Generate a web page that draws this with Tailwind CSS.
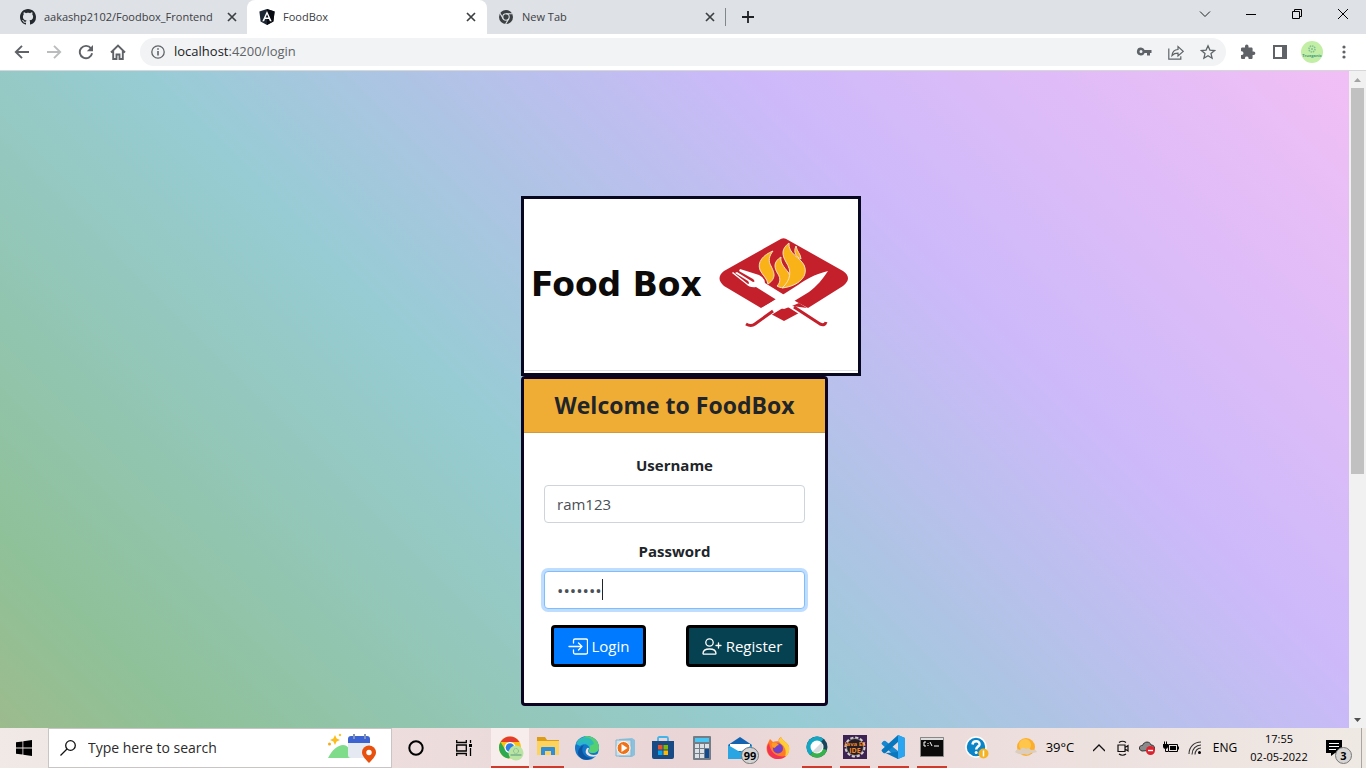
<!DOCTYPE html>
<html lang="en">
<head>
<meta charset="utf-8">
<meta name="viewport" content="width=device-width, initial-scale=1">
<title>FoodBox</title>
<script src="https://cdn.jsdelivr.net/npm/@tailwindcss/browser@4"></script>
</head>
<body class="flex h-screen flex-col overflow-hidden font-['Open_Sans','Noto_Sans',sans-serif] text-[#212529]">

<!-- Tab strip -->
<header class="shrink-0">
  <div class="flex h-[34px] items-stretch bg-[#dee1e6] text-[11px] text-[#3c4043]">
    <div class="flex w-[247px] items-center pl-5 pr-[7px]">
      <svg class="size-4 shrink-0" viewBox="0 0 16 16" fill="#24292f" aria-hidden="true"><path d="M8 0C3.58 0 0 3.58 0 8c0 3.54 2.29 6.53 5.47 7.59.4.07.55-.17.55-.38 0-.19-.01-.82-.01-1.49-2.01.37-2.53-.49-2.69-.94-.09-.23-.48-.94-.82-1.13-.28-.15-.68-.52-.01-.53.63-.01 1.08.58 1.23.82.72 1.21 1.87.87 2.33.66.07-.52.28-.87.51-1.07-1.78-.2-3.64-.89-3.64-3.95 0-.87.31-1.59.82-2.15-.08-.2-.36-1.02.08-2.12 0 0 .67-.21 2.2.82.64-.18 1.32-.27 2-.27s1.36.09 2 .27c1.53-1.04 2.2-.82 2.2-.82.44 1.1.16 1.92.08 2.12.51.56.82 1.27.82 2.15 0 3.07-1.87 3.75-3.65 3.95.29.25.54.73.54 1.48 0 1.07-.01 1.93-.01 2.2 0 .21.15.46.55.38A8.01 8.01 0 0 0 16 8c0-4.42-3.58-8-8-8z"/></svg>
      <span class="ml-2 flex-1 whitespace-nowrap">aakashp2102/Foodbox_Frontend</span>
      <button class="size-4 shrink-0" aria-label="Close tab"><svg viewBox="0 0 16 16" stroke="#3c4043" stroke-width="1.7" aria-hidden="true"><path d="M4 4l8 8M12 4l-8 8"/></svg></button>
    </div>
    <div class="flex w-[240px] items-center rounded-t-lg bg-white pl-3 pr-2">
      <svg class="size-4 shrink-0" viewBox="0 0 16 16" aria-hidden="true"><path d="M8 0l7.6 2.6-1.2 9.9L8 16l-6.400-3.500L.4 2.600z" fill="#1d2733"/><path d="M8 0l7.600 2.600-1.200 9.900L8 16z" fill="#080c12"/><path fill="#fff" d="M8 1.900L3.300 12.200h1.800l.95-2.300h3.900l.95 2.300h1.800zm0 3.400l1.350 3.200h-2.700z"/></svg>
      <span class="ml-2 flex-1">FoodBox</span>
      <button class="size-4 shrink-0" aria-label="Close tab"><svg viewBox="0 0 16 16" stroke="#3c4043" stroke-width="1.7" aria-hidden="true"><path d="M4 4l8 8M12 4l-8 8"/></svg></button>
    </div>
    <div class="my-2 flex w-[239px] items-center border-r border-[#80868b] pl-3 pr-[7px]">
      <svg class="size-[14px] shrink-0" viewBox="0 0 16 16" aria-hidden="true"><circle cx="8" cy="8" r="8" fill="#3c4043"/><circle cx="8" cy="8" r="3.700" fill="none" stroke="#dee1e6" stroke-width="1.300"/><path d="M8 4.300h7.200M4.800 9.900L1.200 3.700M11.200 9.900L7.600 16" stroke="#dee1e6" stroke-width="1.300"/></svg>
      <span class="ml-[9px] flex-1">New Tab</span>
      <button class="size-4 shrink-0" aria-label="Close tab"><svg viewBox="0 0 16 16" stroke="#3c4043" stroke-width="1.7" aria-hidden="true"><path d="M4 4l8 8M12 4l-8 8"/></svg></button>
    </div>
    <button class="flex w-11 items-center justify-center" aria-label="New tab"><svg class="size-3" viewBox="0 0 12 12" stroke="#202124" stroke-width="1.800" aria-hidden="true"><path d="M6 0v12M0 6h12"/></svg></button>
    <div class="ml-auto flex pb-[6px]">
      <button class="flex w-[46px] items-center justify-center" aria-label="Search tabs"><svg class="size-3" viewBox="0 0 12 12" fill="none" stroke="#202124" aria-hidden="true"><path d="M1 3.500l5 5 5-5"/></svg></button>
      <button class="flex w-[46px] items-center justify-center" aria-label="Minimize"><svg class="size-[10px]" viewBox="0 0 10 10" stroke="#000" aria-hidden="true"><path d="M0 5.500h10"/></svg></button>
      <button class="flex w-[46px] items-center justify-center" aria-label="Restore"><svg class="size-[10px]" viewBox="0 0 10 10" fill="none" stroke="#000" aria-hidden="true"><path d="M.5 2.500h7v7h-7zM2.500 2.500v-2h7v7h-2"/></svg></button>
      <button class="flex w-[46px] items-center justify-center" aria-label="Close"><svg class="size-[10px]" viewBox="0 0 10 10" stroke="#000" aria-hidden="true"><path d="M0 0l10 10M10 0L0 10"/></svg></button>
    </div>
  </div>

  <!-- Address bar -->
  <div class="flex h-[37px] items-center border-b border-[#d5d7da] bg-white pl-[14px] pr-4">
    <nav class="flex gap-4">
      <button aria-label="Back"><svg class="size-4" viewBox="0 0 16 16" fill="none" stroke="#5f6368" stroke-width="1.900" aria-hidden="true"><path d="M15 8H2.500M8 1.800L1.800 8 8 14.200"/></svg></button>
      <button aria-label="Forward"><svg class="size-4" viewBox="0 0 16 16" fill="none" stroke="#babcbe" stroke-width="1.900" aria-hidden="true"><path d="M1 8h12.500M8 1.800L14.200 8 8 14.200"/></svg></button>
      <button aria-label="Reload"><svg class="size-4" viewBox="0 0 16 16" aria-hidden="true"><path d="M13 4.400A6.200 6.200 0 1 0 14.100 9.300" fill="none" stroke="#5f6368" stroke-width="1.900"/><path d="M15 1v6.200H8.800z" fill="#5f6368"/></svg></button>
      <button aria-label="Home"><svg class="size-4" viewBox="0 0 16 16" fill="none" stroke="#5f6368" stroke-width="1.900" aria-hidden="true"><path d="M1 8.500L8 1.500l7 7M3.200 7v8h3.300v-4.500h3V15h3.300V7"/></svg></button>
    </nav>
    <div class="ml-[14px] flex h-7 flex-1 items-center rounded-full bg-[#f1f3f4] pl-[11px] pr-[10px]">
      <svg class="size-[14px] shrink-0" viewBox="0 0 14 14" aria-hidden="true"><circle cx="7" cy="7" r="6.200" fill="none" stroke="#5f6368" stroke-width="1.300"/><path d="M7 6v4.500M7 3.300v1.500" stroke="#5f6368" stroke-width="1.600"/></svg>
      <span class="ml-[9px] flex-1 text-[13px] text-[#5f6368]"><span class="text-[#202124]">localhost</span>:4200/login</span>
      <div class="flex items-center gap-4">
        <button aria-label="Saved passwords"><svg class="size-4" viewBox="0 0 16 16" aria-hidden="true"><path fill="#5f6368" fill-rule="evenodd" d="M5 3.500a4 4 0 1 0 3.600 5.500H11v2.500h3V9h1.500V6H8.600A4 4 0 0 0 5 3.500zm0 2.500a1.500 1.500 0 1 1 0 3 1.500 1.500 0 0 1 0-3z"/></svg></button>
        <button aria-label="Share"><svg class="size-4" viewBox="0 0 16 16" fill="none" stroke="#5f6368" stroke-width="1.200" aria-hidden="true"><path d="M.8 4.500v10.700h12v-3M4 11.500c.4-4 2.600-5.800 6-6V2.600L15.200 7.400 10 12V9.200c-2.700 0-4.500.7-6 2.300z"/></svg></button>
        <button aria-label="Bookmark"><svg class="size-4" viewBox="0 0 16 16" fill="none" stroke="#5f6368" stroke-width="1.300" aria-hidden="true"><path d="M8 1.800l1.900 4.300 4.700.4-3.600 3.100 1.100 4.600L8 11.800l-4.100 2.400L5 9.600 1.400 6.500l4.700-.4z"/></svg></button>
      </div>
    </div>
    <div class="ml-[14px] flex items-center">
      <button aria-label="Extensions"><svg class="size-4" viewBox="0 0 16 16" fill="#5f6368" aria-hidden="true"><path d="M13.600 7.500h-1V4.700c0-.8-.6-1.300-1.400-1.300H8.500V2.300a1.700 1.700 0 0 0-3.500 0v1.100H2.300C1.500 3.400 1 4 1 4.700v2.600h1a1.900 1.900 0 0 1 0 3.700H1v2.700c0 .7.600 1.300 1.300 1.300h2.600v-1a1.900 1.900 0 0 1 3.700 0v1h2.600c.8 0 1.400-.6 1.400-1.300V11h1a1.700 1.700 0 0 0 0-3.500z"/></svg></button>
      <button class="ml-[17px]" aria-label="Side panel"><svg class="size-[14px]" viewBox="0 0 14 14" aria-hidden="true"><path fill="#5f6368" fill-rule="evenodd" d="M0 0h14v14H0zM2 2v10h7V2z"/></svg></button>
      <button class="ml-[14px]" aria-label="Profile"><svg class="size-[22px]" viewBox="0 0 22 22" aria-hidden="true"><circle cx="11" cy="11" r="11" fill="#c3eea5"/><circle cx="11" cy="8" r="3" fill="none" stroke="#7fbf96" stroke-width="1.500" stroke-dasharray="1.500 .8"/><circle cx="11" cy="8" r="1" fill="#7fbf96"/><text x="11" y="16" font-size="4" font-weight="700" text-anchor="middle" fill="#3f9a80">Trueganic</text></svg></button>
      <button class="ml-[15px]" aria-label="Menu"><svg class="h-4 w-3" viewBox="0 0 12 16" fill="#5f6368" aria-hidden="true"><circle cx="6" cy="3" r="1.600"/><circle cx="6" cy="8" r="1.600"/><circle cx="6" cy="13" r="1.600"/></svg></button>
    </div>
  </div>
</header>

<!-- Page -->
<div class="flex min-h-0 flex-1">
  <main class="min-w-0 flex-1 overflow-hidden">
    <div class="flex min-h-[1068px] justify-center bg-[linear-gradient(45deg,#b8ae74,#8fc199,#97ccd4,#cdb9fa,#f1bff5)] pt-[125px]">
      <div class="w-[307px]">
        <div class="flex h-[180px] w-[340px] flex-col border-[3px] border-[#080720] bg-white">
          <div class="flex flex-1 items-center border-b border-[#dee2e6] pl-[7px]">
            <span class="w-[188px] whitespace-nowrap font-['DejaVu_Sans',sans-serif] text-[33px] font-bold leading-none text-[#0d0a0a]">Food Box</span>
            <svg class="h-24 w-[130px]" viewBox="0 0 130 96" role="img" aria-label="Fork, knife and flame">
              <path d="M60 3Q64.500-.5 69 3L124 34Q134 41 124 49L89 71H42L5 49Q-4 41 5 34z" fill="#c4202b"/>
              <path d="M42 71h47L65 58z" fill="#fff"/>
              <path d="M50 76l6-6 9 2 8-3 7 7-15 8z" fill="#c4202b"/>
              <g fill="#f9b218" stroke="#fbe0c0" stroke-width="1">
                <path d="M54 14C44 18 38 25 41 33c3 6 7 8 8 14 9-6 6-12 3-18-3-5-2-10 2-15z"/>
                <path d="M62 20c-8 5-7 11-3 17 3 5 2 9-1 12 3 2 6 2 9 1 6-5 5-10 2-15-4-5-8-9-7-15z"/>
                <path d="M70 6c-8 6-7 12-3 19 6 9 5 18-4 26 17-2 27-12 22-23C81 20 69 17 70 6z"/>
                <path d="M77 9c-3 6 0 11 5 13 0-5-4-7-5-13z"/>
              </g>
              <path d="M109 34C94 38 88 42 79 48L40 73l9 7L90 55c8-6 13-12 19-21z" fill="#fff"/>
              <path d="M13 36l14 11q4 4 10 3l51 32 8-5-50-31q0-5-6-8L21 32l-1 2 14 8q3 3 0 3L18 35l-2 1 13 8q2 3 0 3L14 35z" fill="#fff"/>
              <path d="M54 74L36 87q-4 3-9 0M75 70l26 17q5 2 6-2" fill="none" stroke="#c4202b" stroke-width="3"/>
              <path d="M73 69l7-3 8 5z" fill="#c4202b"/>
            </svg>
          </div>
          <div class="h-[2px]"></div>
        </div>

        <form class="rounded border-[3px] border-[#0c0420] bg-white text-center">
          <h1 class="flex h-[54px] items-center justify-center border-b border-[#cf9a3d] bg-[#f0ad36] text-[23px] font-bold">Welcome to FoodBox</h1>
          <div class="px-5 pb-9 pt-5">
            <label for="username" class="mb-2 block text-[15px] font-bold leading-6">Username</label>
            <input id="username" type="text" value="ram123" class="mb-4 block h-[38px] w-full rounded border border-[#ced4da] bg-white px-3 text-[15px] text-[#495057] outline-none">
            <label for="password" class="mb-2 block text-[15px] font-bold leading-6">Password</label>
            <div class="relative mb-4">
              <input id="password" type="password" value="ram@123" class="block h-[38px] w-full rounded border border-[#80bdff] bg-white px-3 text-[17px] text-[#495057] shadow-[0_0_0_3px_#bfdeff] outline-none">
              <span class="absolute left-[58px] top-2 h-[21px] w-px bg-[#212529]"></span>
            </div>
            <div class="flex justify-center gap-10 text-[15px] text-white">
              <button type="button" class="flex h-[42px] w-[95px] items-center justify-center gap-1 rounded border-[3px] border-black bg-[#007bff]">
                <svg class="size-5" viewBox="0 0 20 20" fill="none" stroke="currentColor" stroke-width="1.300" stroke-linecap="round" stroke-linejoin="round" aria-hidden="true"><path d="M5.500 7V4.500a1.500 1.500 0 0 1 1.500-1.500h11a1.500 1.500 0 0 1 1.500 1.500v12a1.500 1.500 0 0 1-1.500 1.500H7a1.500 1.500 0 0 1-1.500-1.500V14M1 10.500h13M10.500 7l3.500 3.500-3.500 3.500"/></svg>Login</button>
              <button type="button" class="flex h-[42px] w-[112px] items-center justify-center gap-1 rounded border-[3px] border-black bg-[#064152]">
                <svg class="size-5" viewBox="0 0 20 20" fill="none" stroke="currentColor" stroke-width="1.300" stroke-linecap="round" stroke-linejoin="round" aria-hidden="true"><circle cx="7.500" cy="6.500" r="3.700"/><path d="M1 17.500c0-3 2.500-4.500 6.500-4.500s6.500 1.500 6.500 4.500c0 .5-.3.700-.8.700H1.800c-.5 0-.8-.2-.8-.7zM14 9.500h5M16.500 7v5"/></svg>Register</button>
            </div>
          </div>
        </form>
      </div>
    </div>
  </main>
  <div class="flex w-[17px] flex-col items-center bg-[#f1f1f1]" aria-hidden="true">
    <svg class="h-[17px] w-[17px] shrink-0" viewBox="0 0 17 17"><path d="M5 11l3.500-4L12 11z" fill="#a3a3a3"/></svg>
    <div class="flex w-[13px] flex-1 flex-col"><div class="h-[62%] bg-[#c1c1c1]"></div></div>
    <svg class="h-[17px] w-[17px] shrink-0" viewBox="0 0 17 17"><path d="M5 7l3.500 4L12 7z" fill="#505050"/></svg>
  </div>
</div>

<!-- Taskbar -->
<footer class="flex h-10 shrink-0 items-stretch bg-linear-to-r from-[#f0e9e6] via-[#ead5d6] via-50% to-[#efe9e4] text-black">
  <button class="flex w-12 items-center justify-center" aria-label="Start"><svg class="size-4" viewBox="0 0 16 16" aria-hidden="true"><path d="M0 2.300l6.500-.9v6.200H0zM7.300 1.300L16 0v7.600H7.300zM0 8.400h6.500v6.200L0 13.700zM7.300 8.400H16V16l-8.700-1.200z"/></svg></button>
  <label class="flex w-[344px] items-center border border-[#c8c5c4] bg-white pl-[11px] pr-[14px]">
    <svg class="size-4 shrink-0" viewBox="0 0 16 16" fill="none" stroke="#111" stroke-width="1.300" aria-hidden="true"><circle cx="10.500" cy="5.500" r="4.800"/><path d="M7 9L.5 15.500"/></svg>
    <input type="text" aria-label="Search" placeholder="Type here to search" class="ml-3 w-0 flex-1 text-sm outline-none placeholder:text-[#2b2b2b]">
    <svg class="h-8 w-[50px] shrink-0" viewBox="0 0 50 32" aria-hidden="true"><path d="M1 26c4-8 10-13 15-13s7 4 9 13z" fill="#7fdc8b"/><path d="M8 3l1.600 3.400L13 8l-3.400 1.600L8 13l-1.600-3.400L3 8l3.400-1.600z" fill="#fbbc1d"/><circle cx="2.500" cy="12" r="1.500" fill="#f6a81c"/><circle cx="13" cy="3" r="1.200" fill="#fbc52c"/><rect x="21" y="5" width="22" height="21" rx="3" fill="#e4e9f2"/><path d="M21 11V7q0-3 3-3h16q3 0 3 3v4z" fill="#3d63d2"/><path d="M27 2v5M38 2v5" stroke="#8494b5" stroke-width="2"/><path d="M42 31c-5-5-7-8-7-10.500a7 7 0 0 1 14 0C49 23 47 26 42 31z" fill="#e8500e"/><circle cx="42" cy="20.500" r="2.700" fill="#fff"/></svg>
  </label>
  <button class="flex w-12 items-center justify-center" aria-label="Cortana"><svg class="size-4" viewBox="0 0 16 16" aria-hidden="true"><circle cx="8" cy="8" r="6.700" fill="none" stroke="#000" stroke-width="2"/></svg></button>
  <button class="flex w-[47px] items-center justify-center" aria-label="Task view"><svg class="size-4" viewBox="0 0 16 16" fill="none" stroke="#000" stroke-width="1.300" aria-hidden="true"><path d="M.7 0v2.500h9.600V0M.7 16v-2.500h9.600V16M.7 5h9.600v6H.7zM14.500 0v3M14.500 8v8"/><path d="M13 4h3v3h-3z" fill="#000" stroke="none"/></svg></button>

  <nav class="ml-1 grid w-[460px] grid-cols-12" aria-label="Applications">
    <button class="flex flex-col items-center justify-between border-b-2 border-[#d13a2a] bg-[#f7edec]" aria-label="Chrome"><svg class="mt-[7px] h-[26px] w-[28px]" viewBox="-2 0 28 26" aria-hidden="true"><circle cx="12" cy="12.500" r="11" fill="#fbc116"/><path d="M2.500 7a11 11 0 0 0 8.500 16.500l5.500-9L12 12.500 7.500 15z" fill="#2da94f"/><path d="M2.500 7A11 11 0 0 1 21.500 7H12z" fill="#e33b2e"/><circle cx="12" cy="12.500" r="5.500" fill="#fff"/><circle cx="12" cy="12.500" r="4.300" fill="#2f7de9"/><circle cx="18" cy="18" r="7.500" fill="#b9e4a2"/><circle cx="18" cy="16" r="2.500" fill="none" stroke="#76b28c" stroke-dasharray="1 .6"/><path d="M12.500 20h11" stroke="#76b28c" stroke-width="1.500"/></svg></button>
    <button class="mx-1 flex items-center justify-center border-b-2 border-[#d13a2a]" aria-label="File Explorer"><svg class="h-6 w-6 shrink-0" viewBox="0 0 24 24" aria-hidden="true"><path d="M1 2h8l2 3h12v5H1z" fill="#dd9c15"/><path d="M1 6h22v14H1z" fill="#fed25e"/><path d="M5 20v-7q0-1 1-1h12q1 0 1 1v7h-4v-4H9v4z" fill="#2f8edb"/></svg></button>
    <button class="flex items-center justify-center" aria-label="Edge"><svg class="size-6" viewBox="0 0 24 24" aria-hidden="true"><circle cx="12" cy="12" r="12" fill="#1277c9"/><path d="M1 8A12 12 0 0 1 24 11c0 4-3 6-7 6-3 0-4-1-3-3 2-5-5-8-9-4z" fill="#2bb3d4"/><path d="M10 .2A12 12 0 0 1 24 11c0 4-3 6-7 6-2 0-3.500-1-3-2.500 3-5-1-10-8-9z" fill="#54cf72"/><path d="M3 4C11-2 18 3 19 8l-5 2C12 6 6 5 2 8z" fill="#2dbbb9"/><path d="M14 12.500c-3 5 3 8 9 5.500l-1 2c-6 2-13-1-11-6 1-2 2-3 3-1.500z" fill="#eee1e3"/><path d="M9 9c-4 4-1 13 8 13-8 5-17-2-13-9q2-3.500 5-4z" fill="#0d54a0"/></svg></button>
    <button class="flex items-center justify-center" aria-label="Media Player"><svg class="size-[22px]" viewBox="0 0 22 22" aria-hidden="true"><path d="M5 2l13-1 3 2v15l-3 2H5z" fill="#8bc1dd"/><path d="M2 3h15v16H2z" fill="#c9e2ee" stroke="#86b3ca"/><circle cx="9.500" cy="11" r="6.500" fill="#ee7219" stroke="#fff"/><path d="M7.500 7l6 4-6 4z" fill="#fff"/></svg></button>
    <button class="flex items-center justify-center" aria-label="Microsoft Store"><svg class="size-6" viewBox="0 0 24 24" aria-hidden="true"><path d="M7 7V2.500Q7 1 8.500 1h7Q17 1 17 2.500V7" fill="none" stroke="#41b4ea" stroke-width="1.800"/><path d="M1 5h22v16q0 2-2 2H3q-2 0-2-2z" fill="#194a83"/><path d="M7 9h4.500v4.500H7z" fill="#f25022"/><path d="M12.500 9H17v4.500h-4.500z" fill="#7fba00"/><path d="M7 14.500h4.500V19H7z" fill="#00a4ef"/><path d="M12.500 14.500H17V19h-4.500z" fill="#ffb900"/></svg></button>
    <button class="flex items-center justify-center" aria-label="Calculator"><svg class="h-6 w-5" viewBox="0 0 20 24" aria-hidden="true"><rect x="1" width="18" height="24" rx="1" fill="#747d86"/><path d="M3 2h14v4H3z" fill="#49c6f3"/><path d="M3 8h4v4H3zM8 8h4v4H8zM13 8h4v4h-4zM3 13h4v4H3zM8 13h4v4H8zM3 18h4v4H3zM8 18h4v4H8z" fill="#dce1e6"/><path d="M13 13h4v9h-4z" fill="#124b8f"/></svg></button>
    <button class="relative flex items-center justify-center" aria-label="Mail, 99 unread"><svg class="size-6" viewBox="0 0 24 24" aria-hidden="true"><path d="M0 9l12-8 12 8v13H0z" fill="#1463b0"/><path d="M2 8h20v7H2z" fill="#fff"/><path d="M0 9l12 7 12-7v14H0z" fill="#2aa5e4"/></svg><span class="absolute bottom-1 right-0 rounded-full border border-[#777] bg-[#d4d3d4] px-[2px] text-[11px] font-bold leading-[15px]">99</span></button>
    <button class="flex items-center justify-center" aria-label="Firefox"><svg class="size-6" viewBox="0 0 24 24" aria-hidden="true"><path d="M2 7l2-4 3 3c2-1 4-1 6-.5C12 4 13 2 15 1c1 4 7 5 8 10 1 7-4 12-11 12C4 23-1 17 1 9z" fill="#ff7a24"/><path d="M15 1c1 4 7 5 8 10 1 4-1 8-4 10 2-6 0-11-5-14-2-2-1-4 1-6z" fill="#ffce38"/><path d="M1 11c0 14 15 14 19 9-5 1-15 1-17-13z" fill="#f13356"/><circle cx="12" cy="12.500" r="5" fill="#7341c8"/><path d="M6 7c3-1 5 0 7 2-3 0-3 3-5 3-2-1-3-3-2-5z" fill="#ff9c27"/></svg></button>
    <button class="mx-1 flex items-center justify-center border-b-2 border-[#d13a2a]" aria-label="Webex"><svg class="size-[22px] shrink-0" viewBox="0 0 22 22" aria-hidden="true"><circle cx="11" cy="11" r="10.500" fill="#16445b"/><path d="M.5 11a10.500 10.500 0 0 1 17-8L4 19a10.500 10.500 0 0 1-3.500-8z" fill="#13a7c4"/><path d="M4 19A10.500 10.500 0 0 0 21 14L11 11z" fill="#36b24b"/><circle cx="11" cy="11" r="6.500" fill="#fff"/><path d="M15.500 6.500a6.500 6.500 0 0 1-9 9z" fill="#d7dcdf"/></svg></button>
    <button class="mx-1 flex items-center justify-center border-b-2 border-[#d13a2a]" aria-label="Eclipse Java EE IDE"><svg class="size-6 shrink-0" viewBox="0 0 24 24" aria-hidden="true"><path d="M0 0h24v24H0z" fill="#3c2253"/><circle cx="12" cy="12" r="9" fill="#241d26" stroke="#d5d0cb" stroke-width="3" stroke-dasharray="3 1.700"/><circle cx="12" cy="12" r="8.500" fill="#261d28" stroke="#aaa" stroke-width=".7"/><text x="12" y="11" text-anchor="middle" font-size="6" font-weight="700" fill="#f28a24">Java EE</text><text x="12" y="18" text-anchor="middle" font-size="7" font-weight="700" fill="#f28a24">IDE</text></svg></button>
    <button class="mx-1 flex items-center justify-center border-b-2 border-[#d13a2a]" aria-label="Visual Studio Code"><svg class="size-6 shrink-0" viewBox="0 0 24 24" aria-hidden="true"><path d="M17 0l7 3v18l-7 3L1 9.500q-1-1 0-2L2.500 6q1-.7 2 0L17 16z" fill="#1588d1"/><path d="M17 24L4.500 18Q3.500 18.700 2.500 18L1 16.500q-1-1 0-2L17 0v7L4.500 18 17 17z" fill="#0877bd"/><path d="M17 0l7 3v18l-7 3z" fill="#2ba5ef"/></svg></button>
    <button class="mx-1 flex items-center justify-center border-b-2 border-[#d13a2a]" aria-label="Command Prompt"><svg class="h-5 w-6 shrink-0" viewBox="0 0 24 20" aria-hidden="true"><path d="M.5.5h23v19H.5z" fill="#0b0b0b" stroke="#888"/><path d="M1 1h22v2H1z" fill="#ddd"/><path d="M6 5H4v4h2M8 6v1M8 8v1M10 5l2 4M14 9h5" fill="none" stroke="#fff"/></svg></button>
  </nav>
  <button class="ml-3 flex w-7 items-center justify-center" aria-label="Help"><svg class="size-6 shrink-0" viewBox="0 0 24 24" aria-hidden="true"><circle cx="11" cy="11" r="10" fill="#0c85c8" stroke="#fff" stroke-width="1.500"/><path d="M7.500 8.500C8 4 15 4.500 14.500 8.500c-.3 2-3.300 2.200-3.300 5" fill="none" stroke="#fff" stroke-width="2.500"/><circle cx="11.200" cy="16.500" r="1.500" fill="#fff"/><circle cx="18.500" cy="17.500" r="5" fill="#f5b324"/><path d="M18.500 14.500v6" stroke="#fff" stroke-width="1.500"/></svg></button>

  <div class="ml-auto flex items-center text-xs">
    <button class="flex items-center gap-[6px]"><svg class="size-[22px]" viewBox="0 0 22 22" aria-hidden="true"><circle cx="11" cy="10" r="9" fill="#fbae2d"/><circle cx="10" cy="8" r="6" fill="#ffc64b"/><path d="M0 15q2-4 5-2 2-4 6-1 3-2 5 1 5-1 6 2-3 1-6 1-3 3-7 1-5 1-9-2z" fill="#dccdbd"/></svg><span class="w-[34px] whitespace-nowrap text-[13px]">39°C</span></button>
    <button class="ml-[10px] flex w-6 justify-center" aria-label="Hidden icons"><svg class="size-3" viewBox="0 0 12 12" fill="none" stroke="#111" stroke-width="1.300" aria-hidden="true"><path d="M0 9l6-6 6 6"/></svg></button>
    <button class="flex w-6 justify-center" aria-label="Meet now"><svg class="size-4" viewBox="0 0 16 16" fill="none" stroke="#111" stroke-width="1.200" aria-hidden="true"><path d="M3 5h7v6.500H3zM10 7.500l3-2v5.500l-3-2M4 2.500q3.500-2.500 7 0M4 14q3.500 2.500 7 0"/></svg></button>
    <button class="flex w-6 justify-center" aria-label="OneDrive"><svg class="size-4" viewBox="0 0 16 16" aria-hidden="true"><path d="M3 11C-1 10 0 5 3.500 5.500 5 1 11 1 12 5c3 0 4 2 3.500 5z" fill="#8a8a8a" stroke="#333"/><circle cx="11.500" cy="10.500" r="4.500" fill="#dc2430"/><path d="M9 10.500h5" stroke="#fff" stroke-width="1.400"/></svg></button>
    <button class="flex w-6 justify-center" aria-label="Battery"><svg class="size-4" viewBox="0 0 16 16" aria-hidden="true"><path d="M5.500 4.500h9v7h-9z" fill="none" stroke="#000"/><path d="M7 6h6v4H7zM15 6.500h1v3h-1zM0 4h5v3Q4.500 9 2.500 9T0 7zM1 1.500h1V4H1zM3 1.500h1V4H3z"/><path d="M2.500 9v2.500H5" fill="none" stroke="#000"/></svg></button>
    <button class="flex w-6 justify-center" aria-label="Wi-Fi"><svg class="size-[14px]" viewBox="0 0 14 14" fill="none" stroke="#333" stroke-width="1.100" aria-hidden="true"><path d="M1 13C1 6 6 1 13 1M4 13.500C4 8 8 4 13 4M7 13.500C7 10 9.500 7 13 7"/><circle cx="11.500" cy="11.500" r="1.500" fill="#000" stroke="none"/></svg></button>
    <button class="ml-1 w-7">ENG</button>
    <div class="ml-2 flex w-16 flex-col items-center text-[11px] leading-[18px]"><span>17:55</span><span>02-05-2022</span></div>
    <button class="relative ml-[15px] mr-[9px] flex w-[26px]" aria-label="3 notifications"><svg class="size-4" viewBox="0 0 16 16" aria-hidden="true"><path d="M0 0h16v13h-7l-4 3v-3H0z"/><path d="M3 3.500h10M3 6.500h10M3 9.500h7" stroke="#fff" stroke-width="1.200"/></svg><span class="absolute -bottom-2 right-0 size-[17px] rounded-full border border-[#777] bg-[#d6d5d4] text-[11px] font-bold leading-[15px]">3</span></button>
    <button class="h-10 w-[5px] border-l border-[#aaa5a2]" aria-label="Show desktop"></button>
  </div>
</footer>
</body>
</html>
